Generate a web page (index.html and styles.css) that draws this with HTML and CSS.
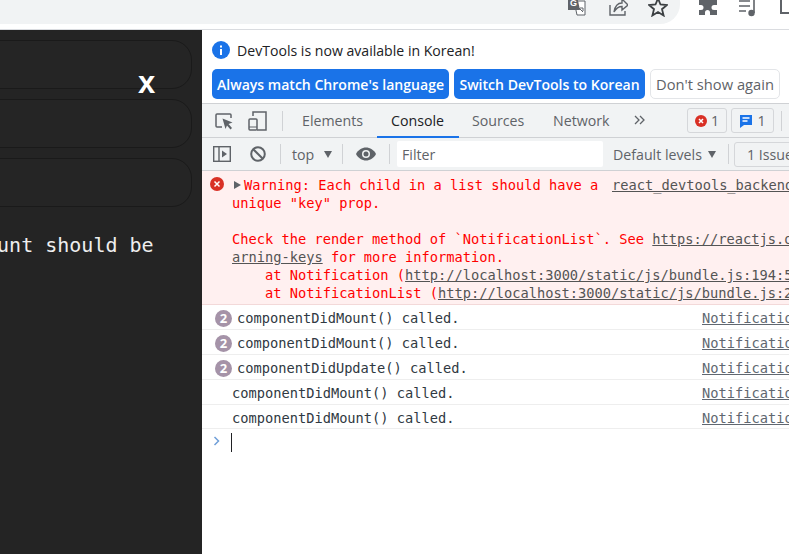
FILE: index.html
```html
<!DOCTYPE html>
<html lang="en">
<head>
<meta charset="utf-8">
<title>DevTools console</title>
<link rel="stylesheet" href="styles.css">
</head>
<body>
<header class="chrome">
  <div class="urlbar">
    <svg class="ci ci-tr" viewBox="0 0 18 18"><path d="M6 3h11v14H9z" fill="#fff" stroke="#5f6368"/><path d="M0-2h9l3 14H0z" fill="#5f6368"/><path d="M11 10l4 4M15 10h-3M15 10v3" stroke="#5f6368" fill="none"/><text x="2" y="8" class="gl">G</text></svg>
    <svg class="ci ci-share" viewBox="0 0 20 20"><path d="M2 8v10h15v-4" fill="none" stroke="#5f6368" stroke-width="1.4"/><path d="M6 15c1-6 4-9 8-9V2l6 6-6 5V9.500c-3 0-6 2-8 5.500z" fill="none" stroke="#5f6368" stroke-width="1.400"/></svg>
    <svg class="ci ci-star" viewBox="0 0 20 20"><path d="M10 1.500l2.500 6 6.500.5-5 4.200 1.600 6.300L10 15.100l-5.600 3.400L6 12.200 1 8l6.500-.5z" fill="none" stroke="#3c4043" stroke-width="1.800"/></svg>
  </div>
  <svg class="ci ci-puzzle" viewBox="0 0 20 20"><path d="M7 0h6v3h6v5h-3a2.500 2.500 0 0 0 0 5h3v5H12v-2.500a2.500 2.500 0 0 0-5 0V18H1v-5h2a2.500 2.500 0 0 0 0-5H1V3h6z" fill="#5f6368"/></svg>
  <svg class="ci ci-media" viewBox="0 0 20 20"><path d="M1 2h11M1 7h11M1 12h7" stroke="#5f6368" stroke-width="1.600"/><path d="M16 1v13" stroke="#5f6368" stroke-width="1.600"/><circle cx="13.500" cy="14" r="3.200" fill="#5f6368"/></svg>
  <span class="winbox"></span>
</header>
<main class="main">
  <aside class="app">
    <div class="card"></div>
    <div class="card"></div>
    <div class="card"></div>
    <p class="apptext">count should be</p>
    <span class="close">x</span>
  </aside>
  <section class="devtools">
    <div class="info">
      <div class="info-head">
        <svg class="info-ico" viewBox="0 0 18 18"><circle cx="9" cy="9" r="9" fill="#1a73e8"/><rect x="8" y="8" width="2" height="6" fill="#fff"/><rect x="8" y="4.500" width="2" height="2" fill="#fff"/></svg>
        <span>DevTools is now available in Korean!</span>
      </div>
      <div class="info-btns">
        <button class="btn btn-a">Always match Chrome's language</button>
        <button class="btn btn-b">Switch DevTools to Korean</button>
        <button class="btn btn-c">Don't show again</button>
      </div>
    </div>
    <nav class="tabs">
      <svg class="tico ti-inspect" viewBox="0 0 18 18"><path d="M7 15H2a1 1 0 0 1-1-1V3a1 1 0 0 1 1-1h13a1 1 0 0 1 1 1v3" fill="none" stroke="#5f6368" stroke-width="1.500" stroke-dasharray="none"/><path d="M7.500 6.500l10 4-4 1.500 3.500 4-1.500 1.500-3.500-4-1.500 3.500z" fill="#5f6368"/></svg>
      <svg class="tico ti-device" viewBox="0 0 19 20"><path d="M5 5V1h13v18H9" fill="none" stroke="#5f6368" stroke-width="1.500"/><rect x="1" y="8" width="8" height="11" rx="1" fill="none" stroke="#5f6368" stroke-width="1.500"/><path d="M1 16h8" stroke="#5f6368"/></svg>
      <span class="sep sep-t"></span>
      <span class="tab tab-el">Elements</span>
      <span class="tab tab-con">Console</span>
      <span class="tab tab-so">Sources</span>
      <span class="tab tab-ne">Network</span>
      <svg class="more" viewBox="0 0 11 10"><path d="M1 1l4 4-4 4M6 1l4 4-4 4" fill="none" stroke="#5f6368" stroke-width="1.300"/></svg>
      <span class="badge b-err"><svg class="bi" viewBox="0 0 12 12"><circle cx="6" cy="6" r="6" fill="#d93025"/><path d="M4 4l4 4M8 4l-4 4" stroke="#fff" stroke-width="1.500"/></svg>1</span>
      <span class="badge b-msg"><svg class="bi bi-m" viewBox="0 0 14 14"><path d="M1 1h12v10H5l-4 3z" fill="#1a73e8"/><path d="M3.500 4h7M3.500 7h5" stroke="#fff" stroke-width="1.300"/></svg>1</span>
      <span class="sep sep-e"></span>
    </nav>
    <div class="ctool">
      <svg class="tico tc-side" viewBox="0 0 18 16"><rect x=".7" y=".7" width="16.600" height="14.600" fill="none" stroke="#5f6368" stroke-width="1.400"/><path d="M6 1v14" stroke="#5f6368" stroke-width="1.400"/><path d="M9 4.500l5 3.500-5 3.500z" fill="#5f6368"/></svg>
      <svg class="tico tc-block" viewBox="0 0 16 16"><circle cx="8" cy="8" r="6.800" fill="none" stroke="#5f6368" stroke-width="2"/><path d="M3.200 3.200l9.600 9.600" stroke="#5f6368" stroke-width="2"/></svg>
      <span class="sep sep-a"></span>
      <span class="ctx">top</span><span class="arrow arrow-top"></span>
      <span class="sep sep-b"></span>
      <svg class="tico tc-eye" viewBox="0 0 20 14"><path d="M0 7c2-4 6-6.500 10-6.500S18 3 20 7c-2 4-6 6.500-10 6.500S2 11 0 7z" fill="#5f6368"/><circle cx="10" cy="7" r="4" fill="#f1f3f4"/><circle cx="10" cy="7" r="2.500" fill="#5f6368"/></svg>
      <span class="sep sep-c"></span>
      <div class="filter">Filter</div>
      <span class="levels">Default levels</span><span class="arrow arrow-lv"></span>
      <span class="sep sep-d"></span>
      <span class="issues">1 Issue: 1</span>
    </div>
    <div class="log">
      <div class="err">
        <svg class="err-ico" viewBox="0 0 14 14"><circle cx="7" cy="7" r="7" fill="#d93025"/><path d="M4.500 4.500l5 5M9.500 4.500l-5 5" stroke="#fff" stroke-width="1.500"/></svg>
        <div class="line line-first"><span class="tri"></span><span class="line-msg">Warning: Each child in a list should have a</span><a class="src">react_devtools_backend.js:4026</a></div>
        <div class="line">unique "key" prop.</div>
        <div class="line">&nbsp;</div>
        <div class="line">Check the render method of `NotificationList`. See <a class="src">https://reactjs.org/link/w</a></div>
        <div class="line"><a class="src">arning-keys</a> for more information.</div>
        <div class="line">    at Notification (<a class="src">http://localhost:3000/static/js/bundle.js:194:5</a>)</div>
        <div class="line">    at NotificationList (<a class="src">http://localhost:3000/static/js/bundle.js:2</a></div>
      </div>
      <div class="row"><span class="count">2</span><span class="msg msg-c">componentDidMount() called.</span><a class="nsrc">Notification.js:10</a></div>
      <div class="row"><span class="count">2</span><span class="msg msg-c">componentDidMount() called.</span><a class="nsrc">Notification.js:10</a></div>
      <div class="row"><span class="count">2</span><span class="msg msg-c">componentDidUpdate() called.</span><a class="nsrc">Notification.js:14</a></div>
      <div class="row"><span class="msg msg-p">componentDidMount() called.</span><a class="nsrc">Notification.js:10</a></div>
      <div class="row row-last"><span class="msg msg-p">componentDidMount() called.</span><a class="nsrc">Notification.js:10</a></div>
      <div class="prompt"><svg class="chev" viewBox="0 0 8 10"><path d="M1.500 1l4 4-4 4" fill="none" stroke="#6f9fd8" stroke-width="1.500"/></svg><span class="caret"></span></div>
    </div>
  </section>
</main>
</body>
</html>
```
FILE: styles.css
```css
* { box-sizing: border-box; }
html, body { margin: 0; height: 100%; overflow: hidden; background: #fff; }
body { width: 789px; height: 554px; font-family: "Open Sans", "Noto Sans", sans-serif; }

.chrome { height: 30px; display: flex; align-items: flex-start; background: #fff; border-bottom: 1px solid #dadce0; overflow: hidden; }
.urlbar { width: 680px; height: 24px; flex: none; background: #f1f3f4; border-bottom-right-radius: 20px; display: flex; align-items: flex-start; padding-left: 568px; }
.ci { display: block; flex: none; }
.ci-tr { width: 18px; height: 18px; margin-top: -2px; }
.ci-share { width: 20px; height: 20px; margin: -3px 0 0 22px; }
.ci-star { width: 20px; height: 20px; margin: -3px 0 0 20px; }
.ci-puzzle { width: 20px; height: 20px; margin: -3px 0 0 18px; }
.ci-media { width: 20px; height: 20px; margin: -1px 0 0 20px; }
.gl { font: bold 9px "Liberation Sans", sans-serif; fill: #fff; }
.winbox { width: 20px; height: 16px; margin: -2px 0 0 22px; border: 2px solid #5f6368; border-right: 0; flex: none; }

.main { display: flex; height: 524px; }
.app { width: 202px; flex: none; background: #242424; padding-top: 10px; position: relative; overflow: hidden; }
.card { width: 232px; height: 49px; margin: 0 0 10px -40px; background: #252525; border: 1px solid #1a1a1a; border-radius: 20px; }
.apptext { margin: 24px 0 0 -27px; font: 20px/28px "DejaVu Sans Mono", monospace; color: #eee; white-space: nowrap; }
.close { position: absolute; left: 138px; top: 33px; font: bold 31px/40px "Liberation Sans", sans-serif; color: #fff; }

.devtools { flex: 1; min-width: 0; overflow: hidden; background: #fff; }
.info { height: 74px; padding: 9px 0 0 10px; border-bottom: 1px solid #cfd1d4; }
.info-head { display: flex; align-items: center; height: 22px; color: #202124; font-size: 14.1px; }
.info-ico { width: 18px; height: 18px; margin-right: 7px; flex: none; }
.info-btns { display: flex; gap: 5px; margin-top: 8px; }
.btn { height: 30px; padding: 0; border-radius: 5px; font: 600 14.05px "Open Sans", sans-serif; white-space: nowrap; border: 0; flex: none; }
.btn-a { width: 237px; background: #1a73e8; color: #fff; }
.btn-b { width: 191px; background: #1a73e8; color: #fff; }
.btn-c { width: 130px; background: #fff; border: 1px solid #e3e5e8; color: #5f6368; font-size: 14.7px; font-weight: 400; }

.tabs { height: 34px; display: flex; align-items: center; background: #f1f3f4; border-bottom: 1px solid #cfd1d4; position: relative; color: #5f6368; font-size: 14.2px; white-space: nowrap; }
.tico { display: block; flex: none; }
.ti-inspect { width: 18px; height: 18px; margin-left: 13px; }
.ti-device { width: 19px; height: 20px; margin-left: 15px; }
.sep { width: 1px; height: 20px; background: #d0d2d5; flex: none; display: block; }
.sep-t { margin-left: 15px; }
.tab { display: block; flex: none; }
.tab-el { margin-left: 19px; width: 60px; }
.tab-con { margin-left: 29px; width: 53px; color: #202124; }
.tab-con::after { content: ""; position: absolute; left: 175px; bottom: -1px; width: 82px; height: 2px; background: #1a73e8; }
.tab-so { margin-left: 28px; width: 52px; }
.tab-ne { margin-left: 29px; width: 56px; }
.more { display: block; flex: none; margin: -2px 0 0 25px; width: 11px; height: 10px; }
.badge { display: flex; align-items: center; justify-content: center; height: 25px; border: 1px solid #d5d7da; border-radius: 3px; flex: none; gap: 4px; }
.b-err { width: 40px; margin-left: 42px; }
.b-msg { width: 43px; margin-left: 4px; }
.bi { width: 12px; height: 12px; display: block; }
.bi-m { width: 14px; height: 14px; }
.sep-e { margin-left: 7px; }

.ctool { height: 33px; display: flex; align-items: center; background: #f1f3f4; border-bottom: 1px solid #cfd1d4; color: #5f6368; font-size: 14.2px; white-space: nowrap; }
.tc-side { width: 18px; height: 16px; margin-left: 11px; }
.tc-block { width: 16px; height: 16px; margin-left: 19px; }
.sep-a { margin-left: 14px; }
.ctx { margin-left: 11px; width: 24px; flex: none; }
.arrow { width: 0; height: 0; border-left: 4.500px solid transparent; border-right: 4.500px solid transparent; border-top: 7px solid #5f6368; flex: none; }
.arrow-top { margin-left: 8px; }
.sep-b { margin-left: 10px; }
.tc-eye { width: 20px; height: 14px; margin-left: 13px; }
.sep-c { margin-left: 13px; }
.filter { width: 206px; height: 26px; margin-left: 7px; background: #fff; border-radius: 2px; line-height: 28px; padding-left: 5px; flex: none; }
.levels { margin-left: 10px; width: 88px; flex: none; }
.arrow-lv { margin-left: 7px; }
.sep-d { margin-left: 12px; }
.issues { margin-left: 5px; height: 25px; line-height: 23px; border: 1px solid #d5d7da; border-radius: 3px; padding-left: 12px; flex: none; width: 90px; overflow: hidden; }

.log { font: 13.7px/18px "DejaVu Sans Mono", monospace; color: #303942; }
.err { position: relative; height: 134px; padding: 5px 0 0 30px; background: #fff0f0; border-bottom: 1px solid #f3d9d9; color: #f00; }
.err-ico { position: absolute; left: 8px; top: 6px; width: 14px; height: 14px; }
.line { white-space: pre; height: 18px; }
.line-first { display: flex; align-items: baseline; }
.tri { width: 0; height: 0; border-left: 7px solid #5f6368; border-top: 4.500px solid transparent; border-bottom: 4.500px solid transparent; margin: 0 3px 0 2px; align-self: center; flex: none; }
.line-msg { width: 368px; flex: none; }
.src { color: #545454; text-decoration: underline; }
.row { height: 25px; display: flex; align-items: center; padding: 2px 0 0 13px; border-bottom: 1px solid #eeeeee; white-space: nowrap; }
.row-last { height: 24px; }
.count { width: 17px; height: 17px; border-radius: 50%; background: #a593a8; color: #fff; font: bold 13px/17px "Open Sans", sans-serif; text-align: center; flex: none; }
.msg { display: block; flex: none; }
.msg-c { width: 465px; margin-left: 5px; }
.msg-p { width: 470px; margin-left: 17px; }
.nsrc { color: #606770; text-decoration: underline; flex: none; }
.prompt { display: flex; align-items: center; height: 26px; padding-left: 11px; }
.chev { width: 8px; height: 10px; display: block; flex: none; margin-top: -3px; }
.caret { width: 1px; height: 19px; background: #202124; margin-left: 10px; flex: none; }
```
